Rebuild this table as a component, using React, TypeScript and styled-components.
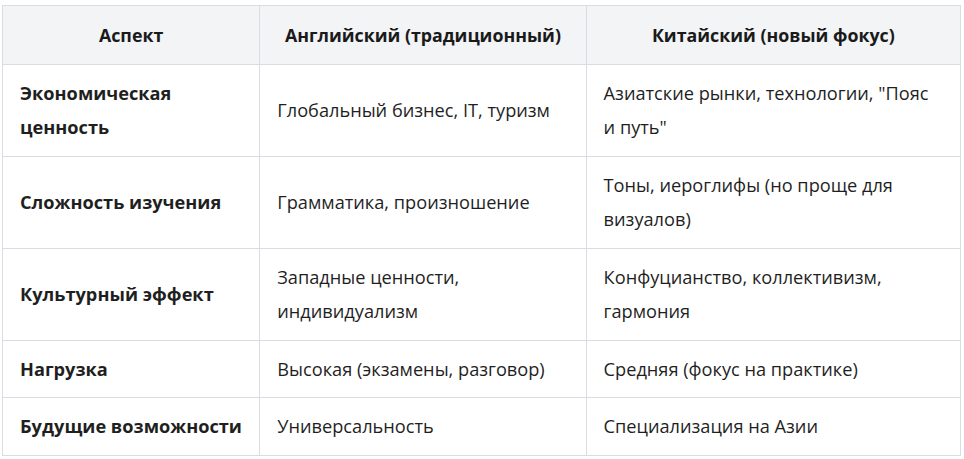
import styled, { createGlobalStyle } from 'styled-components';

const GlobalStyle = createGlobalStyle`
  body {
    margin: 0;
    background: #ffffff;
    font-family: "Open Sans", "Noto Sans", sans-serif;
    color: #1f1f1f;
  }
`;

const rows = [
  {
    aspect: 'Экономическая ценность',
    english: 'Глобальный бизнес, IT, туризм',
    chinese: 'Азиатские рынки, технологии, "Пояс и путь"',
  },
  {
    aspect: 'Сложность изучения',
    english: 'Грамматика, произношение',
    chinese: 'Тоны, иероглифы (но проще для визуалов)',
  },
  {
    aspect: 'Культурный эффект',
    english: 'Западные ценности, индивидуализм',
    chinese: 'Конфуцианство, коллективизм, гармония',
  },
  {
    aspect: 'Нагрузка',
    english: 'Высокая (экзамены, разговор)',
    chinese: 'Средняя (фокус на практике)',
  },
  {
    aspect: 'Будущие возможности',
    english: 'Универсальность',
    chinese: 'Специализация на Азии',
  },
];

const App = () => {
  return (
    <>
      <GlobalStyle />
      <Wrapper>
        <Table>
          <colgroup>
            <col style={{ width: 257 }} />
            <col style={{ width: 326 }} />
            <col style={{ width: 374 }} />
          </colgroup>
          <thead>
            <tr>
              <HeadCell>Аспект</HeadCell>
              <HeadCell>Английский (традиционный)</HeadCell>
              <HeadCell>Китайский (новый фокус)</HeadCell>
            </tr>
          </thead>
          <tbody>
            {rows.map((row) => (
              <tr key={row.aspect}>
                <Cell $bold>{row.aspect}</Cell>
                <Cell>{row.english}</Cell>
                <Cell>{row.chinese}</Cell>
              </tr>
            ))}
          </tbody>
        </Table>
      </Wrapper>
    </>
  );
};

const Wrapper = styled.div`
  padding: 5px 3px 0 2px;
`;

const Table = styled.table`
  width: 959px;
  table-layout: fixed;
  border-collapse: collapse;
  border: 1px solid #d9dde2;
`;

const HeadCell = styled.th`
  background-color: #f2f4f6;
  border: 1px solid #d9dde2;
  padding: 11.5px 17px;
  line-height: 34.5px;
  font-size: 17.8px;
  font-weight: 700;
  text-align: center;
  color: #1a1a1a;
`;

const Cell = styled.td<{ $bold?: boolean }>`
  border: 1px solid #d9dde2;
  padding: 11px 17px;
  line-height: 34.5px;
  font-size: 18.2px;
  font-weight: ${(p) => (p.$bold ? 700 : 400)};
  text-align: left;
  vertical-align: middle;
  color: #1f1f1f;
`;

export default App;
